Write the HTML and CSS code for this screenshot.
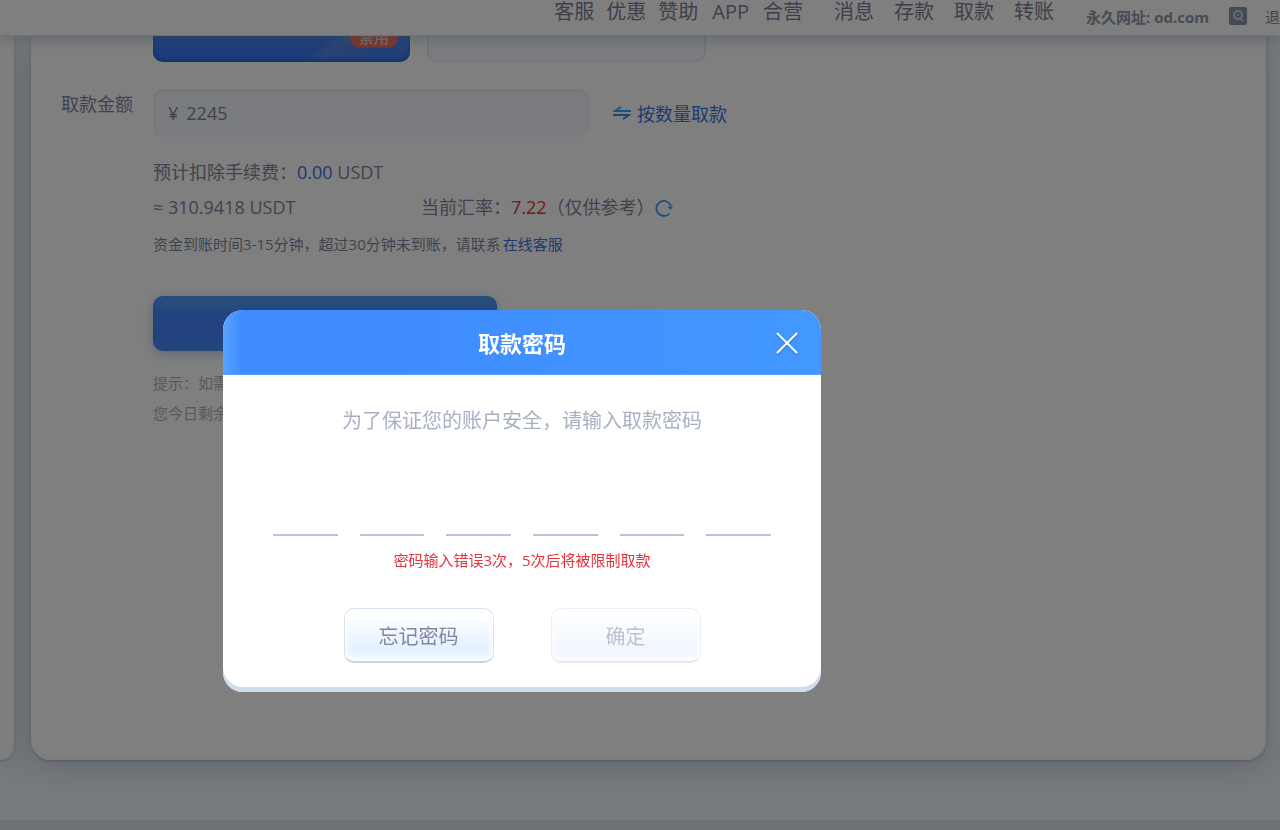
FILE: index.html
```html
<!DOCTYPE html>
<html lang="zh-CN">
<head>
<meta charset="utf-8">
<meta name="viewport" content="width=device-width, initial-scale=1">
<title>取款</title>
<link rel="stylesheet" href="styles.css">
</head>
<body>
<div class="page">
  <header class="topbar">
    <nav class="nav nav-main">
      <a href="#">客服</a><a href="#">优惠</a><a href="#">赞助</a><a href="#">APP</a><a href="#">合营</a>
    </nav>
    <nav class="nav nav-user">
      <a href="#">消息</a><a href="#">存款</a><a href="#">取款</a><a href="#">转账</a>
    </nav>
    <div class="tools">
      <span class="site">永久网址: od.com</span>
      <button class="search" type="button" aria-label="搜索">
        <svg width="18" height="18" viewBox="0 0 18 18" fill="none">
          <rect width="18" height="18" rx="2" fill="#8a92a8"/>
          <circle cx="9" cy="8" r="4" stroke="#d5dbe8" stroke-width="2"/>
          <path d="M11 11l3 3" stroke="#d5dbe8" stroke-width="2"/>
          <circle cx="9" cy="8" r="1" fill="#d5dbe8"/>
        </svg>
      </button>
      <a class="logout" href="#">退出</a>
    </div>
  </header>

  <div class="columns">
    <aside class="side"></aside>
    <main class="panel">
      <div class="cards">
        <div class="card card-active"><span class="badge">禁用</span></div>
        <div class="card"></div>
      </div>

      <form class="form">
        <label class="label" for="amount">取款金额</label>
        <div class="amount-row">
          <div class="field">
            <span>¥</span>
            <input id="amount" type="text" value="2245">
          </div>
          <a class="link switch" href="#">
            <svg width="18" height="14" viewBox="0 0 18 14" fill="none" stroke="#45a1ee" stroke-width="2">
              <path d="M18 5H2l6-4"/>
              <path d="M0 9h16l-6 4" stroke="#3f86ea"/>
            </svg>
            按数量取款
          </a>
        </div>
        <div class="details">
          <p class="line">预计扣除手续费：<span class="link">0.00</span> USDT</p>
          <div class="rate">
            <p class="line">≈ 310.9418 USDT</p>
            <p class="line">当前汇率：<span class="red">7.22</span>（仅供参考）</p>
            <button class="refresh" type="button" aria-label="刷新汇率">
              <svg width="18" height="18" viewBox="0 0 18 18" fill="none">
                <path d="M14.500 14.500A7.500 7.500 0 1 1 16 7" stroke="#3d9bea" stroke-width="1.800"/>
                <path d="M12.500 7.500h5.500l-2.500 3.500z" fill="#3d9bea"/>
              </svg>
            </button>
          </div>
          <p class="note">资金到账时间3-15分钟，超过30分钟未到账，请联系<a class="link" href="#">在线客服</a></p>
          <button class="submit" type="button" aria-label="立即取款"></button>
          <p class="hint">提示：如需</p>
          <p class="hint">您今日剩余</p>
        </div>
      </form>
    </main>
  </div>
  <footer class="footer"></footer>
</div>

<div class="overlay">
  <section class="modal" role="dialog" aria-modal="true" aria-labelledby="modal-title">
    <header class="modal-head">
      <h2 id="modal-title">取款密码</h2>
      <button class="close" type="button" aria-label="关闭">
        <svg width="22" height="22" viewBox="0 0 22 22" fill="none" stroke="#fff" stroke-width="2" stroke-linecap="round">
          <path d="M1.500 1.500l19 19M20.500 1.500l-19 19"/>
        </svg>
      </button>
    </header>
    <div class="modal-body">
      <p class="prompt">为了保证您的账户安全，请输入取款密码</p>
      <div class="digits">
        <input type="password" maxlength="1" aria-label="第1位">
        <input type="password" maxlength="1" aria-label="第2位">
        <input type="password" maxlength="1" aria-label="第3位">
        <input type="password" maxlength="1" aria-label="第4位">
        <input type="password" maxlength="1" aria-label="第5位">
        <input type="password" maxlength="1" aria-label="第6位">
      </div>
      <p class="error">密码输入错误3次，5次后将被限制取款</p>
      <div class="actions">
        <button class="btn" type="button">忘记密码</button>
        <button class="btn" type="button" disabled>确定</button>
      </div>
    </div>
  </section>
</div>
</body>
</html>
```
FILE: styles.css
```css
* { box-sizing: border-box; }

body {
  margin: 0;
  font-family: "Open Sans", "Noto Sans CJK SC", sans-serif;
  font-size: 18px;
  color: #81859a;
  background: #f1f6fb;
}

p, h2 { margin: 0; font-weight: 400; }
a { color: inherit; text-decoration: none; }
button, input { font: inherit; color: inherit; border: 0; padding: 0; background: none; }
button { cursor: pointer; }
svg { display: block; }

.page {
  display: flex;
  flex-direction: column;
  min-height: 100vh;
}

/* Top bar */
.topbar {
  position: relative;
  z-index: 1;
  display: flex;
  justify-content: flex-end;
  align-items: flex-start;
  height: 36px;
  background: #fff;
  border-bottom: 1px solid #dfe5ee;
  box-shadow: 0 2px 16px rgba(120, 145, 170, 0.5);
  white-space: nowrap;
}
.nav { display: flex; font-size: 20px; line-height: 24px; color: #7b8096; }
.nav-main { gap: 12px; margin-right: 31px; }
.nav-main a:nth-child(4) { margin: 0 2px; }
.nav-user { gap: 20px; margin-right: 32px; }
.tools {
  display: flex;
  align-items: center;
  gap: 18px;
  height: 32px;
  width: 194px;
  overflow: hidden;
  font-size: 15px;
}
.site { font-weight: 700; color: #8f96a6; flex: none; margin-right: 2px; }
.search, .logout { flex: none; }

/* Columns */
.columns { display: flex; gap: 17px; padding-right: 14px; }
.side, .panel {
  background: #fff;
  box-shadow: 0 8px 30px rgba(125, 145, 170, 0.4), 0 1px 3px rgba(110, 125, 145, 0.4), inset 0 -5px 0 #fcf9ff;
}
.side { width: 14px; border-radius: 0 0 20px 0; }
.panel { flex: 1; min-height: 724px; padding-left: 30px; border-radius: 0 0 20px 20px; }

.cards {
  display: flex;
  align-items: flex-end;
  gap: 17px;
  height: 26px;
  margin: 0 0 27px 92px;
  overflow: hidden;
}
.card {
  flex: none;
  width: 279px;
  height: 72px;
  border: 2px solid #e6ebf5;
  border-radius: 10px;
  background: #f7f9fe;
}
.card-active {
  display: flex;
  justify-content: flex-end;
  align-items: flex-end;
  width: 257px;
  padding: 0 12px 14px;
  border: 0;
  background: linear-gradient(140deg, #3b79f2 0 68%, #5488e8 72%, #447fee 86%);
  box-shadow: inset 0 -3px 4px #2866dc;
}
.badge {
  padding: 0 9px;
  border-radius: 10px;
  background: #f7695a;
  color: #ffd9c8;
  font-size: 15px;
  font-weight: 500;
  line-height: 22px;
}

/* Form */
.form { display: grid; grid-template-columns: 92px 1fr; }
.label { line-height: 30px; }
.amount-row { display: flex; align-items: center; gap: 24px; }
.field {
  display: flex;
  align-items: center;
  gap: 8px;
  width: 436px;
  height: 48px;
  padding: 0 15px;
  border-radius: 10px;
  background: #f5f8fe;
  box-shadow: inset 0 2px 4px #dfe8f3;
}
.field input { flex: 1; min-width: 0; outline: 0; }
.link { color: #3c74dc; }
.red { color: #e0343d; }
.switch { display: flex; align-items: center; gap: 6px; }

.details { grid-column: 2; padding-top: 18px; }
.line { line-height: 35px; }
.rate { display: flex; align-items: center; }
.rate .line:first-child { width: 268px; }
.note { margin-top: 4px; font-size: 15px; line-height: 30px; }
.note .link { margin-left: 2px; }
.submit {
  display: block;
  width: 344px;
  height: 55px;
  margin: 37px 0 17px;
  border-radius: 10px;
  background: linear-gradient(#50a5f8, #4487fa 35%, #4486fa 75%, #4a90f5);
  box-shadow: 0 3px 12px rgba(90, 130, 190, 0.4), inset 0 0 5px #3f8ae0;
}
.hint { font-size: 15px; line-height: 30px; color: #b0b1b6; }

.footer { flex: 1; margin-top: 60px; min-height: 10px; background: #e0e4e9; }

/* Dialog */
.overlay {
  position: fixed;
  inset: 0;
  z-index: 2;
  padding: 310px 0 0 223px;
  background: rgba(0, 0, 0, 0.5);
}
.modal {
  width: 598px;
  max-width: 100%;
  border-radius: 20px;
  overflow: hidden;
  background: #fff;
  box-shadow: inset 0 -5px 0 #cfdcec;
}
.modal-head {
  display: grid;
  grid-template-columns: 1fr auto 1fr;
  align-items: center;
  height: 65px;
  padding: 0 23px;
  background: linear-gradient(90deg, #59a3ff, #3f8cff 3%, #3f8cff 30%, #4398ff);
  box-shadow: inset 0 -1px 1px #55a4ff;
}
.modal-head h2 {
  grid-column: 2;
  font-size: 22px;
  font-weight: 700;
  line-height: 32px;
  color: #fff;
}
.close { justify-self: end; filter: drop-shadow(0 1px 1px #2f6fd0); }
.modal-body { padding: 31px 50px 29px; text-align: center; }
.prompt { font-size: 20px; line-height: 30px; color: #a9b0c4; }
.digits { display: grid; grid-template-columns: repeat(6, 1fr); gap: 22px; margin-top: 52px; }
.digits input {
  min-width: 0;
  height: 48px;
  border-bottom: 2px solid #b9c5d6;
  border-radius: 0;
  text-align: center;
  outline: 0;
}
.error { margin-top: 9px; font-size: 15px; line-height: 30px; color: #e5343d; }
.actions { display: flex; justify-content: center; gap: 57px; margin-top: 33px; }
.btn {
  width: 150px;
  height: 55px;
  border: 1px solid #d8e3f1;
  border-bottom: 2px solid #c6d5e9;
  border-radius: 10px;
  background: linear-gradient(#fff 10%, #e5f1ff 75%, #eff6ff);
  box-shadow: inset 0 0 5px 2px #fff;
  font-size: 20px;
  color: #7b87a0;
}
.btn:disabled { opacity: 0.5; color: #7b87a0; cursor: default; }
```
